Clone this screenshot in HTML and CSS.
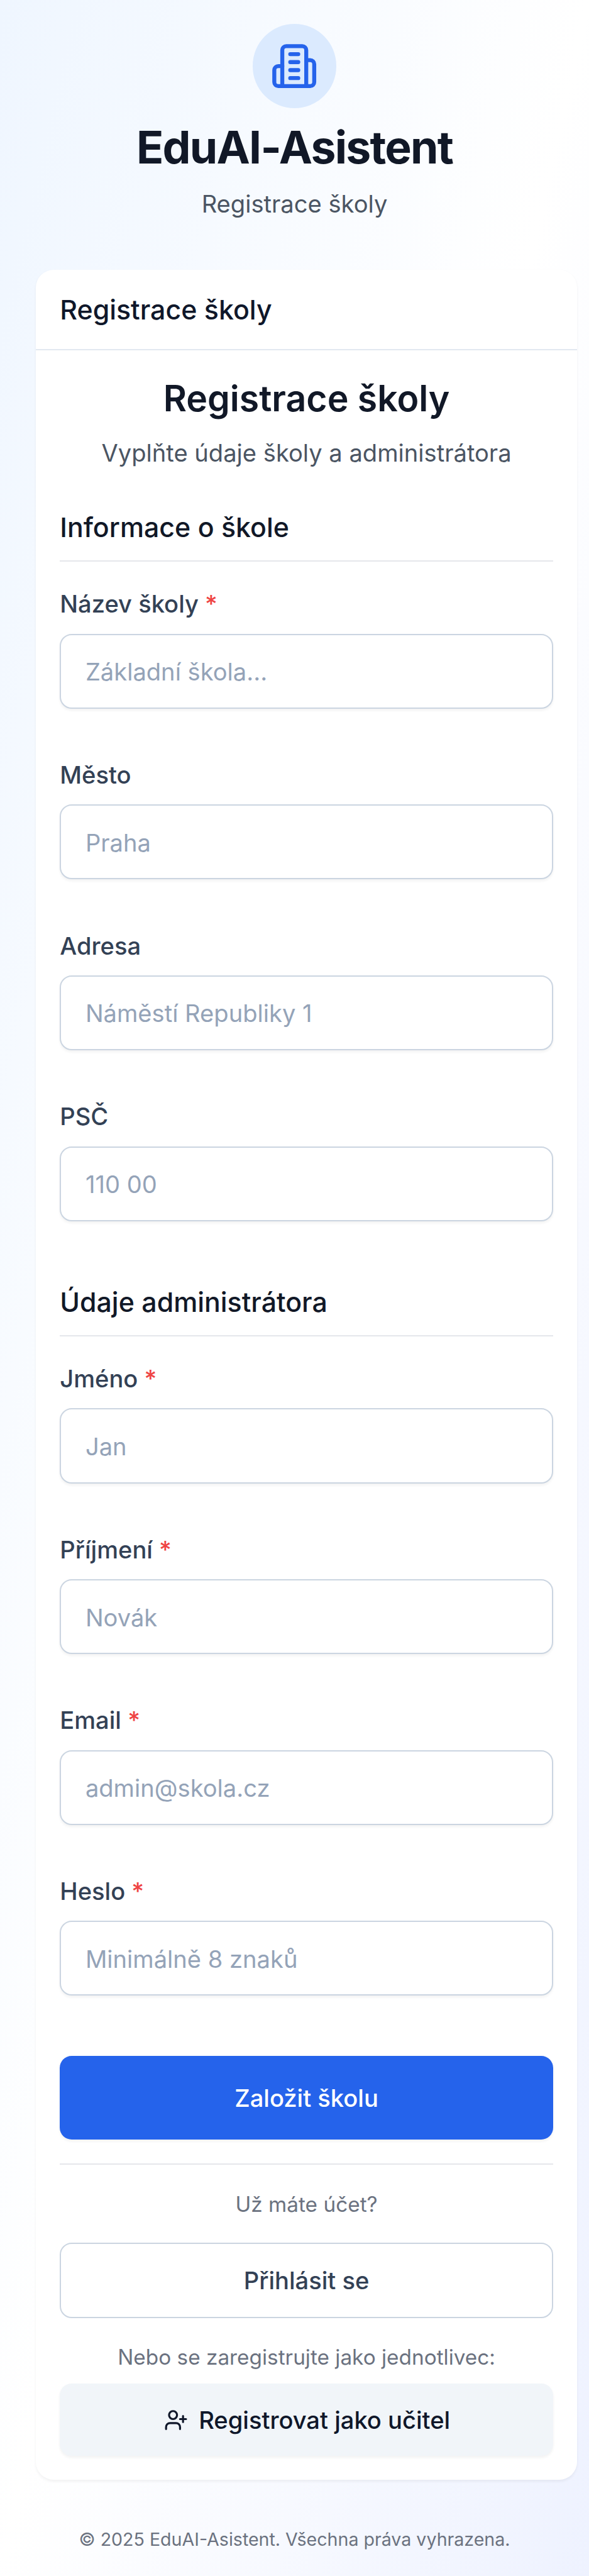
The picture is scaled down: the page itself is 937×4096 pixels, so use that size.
FILE: index.html
```html
<!DOCTYPE html>
<html lang="cs">
<head>
  <meta charset="utf-8">
  <title>EduAI-Asistent – Registrace školy</title>
  <link rel="stylesheet" href="styles.css">
</head>
<body>
  <div class="page">
    <header class="brand">
      <div class="brand-icon">
        <svg viewBox="0 0 24 24" class="icon icon-lg" aria-hidden="true">
          <path d="M6 22V4a2 2 0 0 1 2-2h8a2 2 0 0 1 2 2v18Z"/>
          <path d="M6 12H4a2 2 0 0 0-2 2v6a2 2 0 0 0 2 2h2"/>
          <path d="M18 9h2a2 2 0 0 1 2 2v9a2 2 0 0 1-2 2h-2"/>
          <path d="M10 6h4M10 10h4M10 14h4M10 18h4"/>
        </svg>
      </div>
      <h1 class="brand-title">EduAI-Asistent</h1>
      <p class="brand-subtitle">Registrace školy</p>
    </header>

    <main class="card">
      <div class="card-header"><h3 class="card-title">Registrace školy</h3></div>
      <div class="card-body">
        <div class="intro">
          <h2 class="intro-title">Registrace školy</h2>
          <p class="intro-text">Vyplňte údaje školy a administrátora</p>
        </div>

        <form class="form">
          <section class="section">
            <h3 class="section-title">Informace o škole</h3>
            <div class="fields">
              <div class="field">
                <label class="label" for="school">Název školy <span class="required">*</span></label>
                <input class="input" id="school" type="text" placeholder="Základní škola...">
              </div>
              <div class="field">
                <label class="label" for="city">Město</label>
                <input class="input" id="city" type="text" placeholder="Praha">
              </div>
              <div class="field">
                <label class="label" for="address">Adresa</label>
                <input class="input" id="address" type="text" placeholder="Náměstí Republiky 1">
              </div>
              <div class="field">
                <label class="label" for="zip">PSČ</label>
                <input class="input" id="zip" type="text" placeholder="110 00">
              </div>
            </div>
          </section>

          <section class="section">
            <h3 class="section-title">Údaje administrátora</h3>
            <div class="fields">
              <div class="field">
                <label class="label" for="first">Jméno <span class="required">*</span></label>
                <input class="input" id="first" type="text" placeholder="Jan">
              </div>
              <div class="field">
                <label class="label" for="last">Příjmení <span class="required">*</span></label>
                <input class="input" id="last" type="text" placeholder="Novák">
              </div>
              <div class="field">
                <label class="label" for="email">Email <span class="required">*</span></label>
                <input class="input" id="email" type="email" placeholder="admin@skola.cz">
              </div>
              <div class="field">
                <label class="label" for="password">Heslo <span class="required">*</span></label>
                <input class="input" id="password" type="password" placeholder="Minimálně 8 znaků">
              </div>
            </div>
          </section>

          <button class="button button-primary" type="button">Založit školu</button>
        </form>

        <div class="alternatives">
          <p class="hint">Už máte účet?</p>
          <button class="button button-outline" type="button">Přihlásit se</button>
          <div class="individual">
            <p class="hint">Nebo se zaregistrujte jako jednotlivec:</p>
            <button class="button button-muted" type="button">
              <svg viewBox="0 0 24 24" class="icon icon-sm" aria-hidden="true">
                <path d="M16 21v-2a4 4 0 0 0-4-4H6a4 4 0 0 0-4 4v2"/>
                <circle cx="9" cy="7" r="4"/>
                <path d="M19 8v6M22 11h-6"/>
              </svg>
              Registrovat jako učitel
            </button>
          </div>
        </div>
      </div>
    </main>

    <footer class="footer">© 2025 EduAI-Asistent. Všechna práva vyhrazena.</footer>
  </div>
</body>
</html>
```

FILE: styles.css
```css
/* 0.1rem is one design unit */
html {
  font-size: 23.8275px;
}

*,
*::before,
*::after {
  box-sizing: border-box;
}

body,
h1,
h2,
h3,
p {
  margin: 0;
}

body {
  font-family: Inter, "Liberation Sans", sans-serif;
  font-size: 1.6rem;
  line-height: 2.4rem;
  color: #111827;
}

.page {
  min-height: 100vh;
  padding: 1.6rem 0;
  background: linear-gradient(to bottom right, #eff6ff, #ffffff, #eef2ff);
}

.brand {
  display: flex;
  flex-direction: column;
  align-items: center;
  gap: 0.8rem;
  margin-bottom: 3.2rem;
}

.brand-icon {
  display: flex;
  align-items: center;
  justify-content: center;
  width: 5.6rem;
  height: 5.6rem;
  border-radius: 50%;
  background: #dbeafe;
  color: #2563eb;
}

.icon {
  flex: none;
  fill: none;
  stroke: currentColor;
  stroke-width: 2;
  stroke-linecap: round;
  stroke-linejoin: round;
}

.icon-lg {
  width: 3.2rem;
  height: 3.2rem;
}

.icon-sm {
  width: 1.6rem;
  height: 1.6rem;
  margin-top: -0.08rem;
}

.brand-title {
  font-size: 3rem;
  line-height: 3.6rem;
  font-weight: 700;
  letter-spacing: -0.025em;
}

.brand-subtitle,
.intro-text {
  color: #4b5563;
}

/* optical baseline correction */
.brand-title,
.brand-subtitle,
.intro-text,
.label,
.hint {
  padding-top: 0.04rem;
  margin-bottom: -0.04rem;
}

.card {
  margin: 0 0.8rem 0 2.4rem;
  border-radius: 1.2rem;
  background: #ffffff;
  box-shadow: 0 0.1rem 0.2rem rgba(0, 0, 0, 0.05);
}

.card-header {
  display: flex;
  align-items: center;
  height: 5.4rem;
  padding: 0 1.6rem;
  border-bottom: 0.1rem solid #e2e8f0;
}

.card-title {
  font-size: 1.8rem;
  line-height: 2.8rem;
  font-weight: 500;
  color: #0f172a;
}

.card-body {
  padding: 1.6rem;
}

.intro {
  display: flex;
  flex-direction: column;
  gap: 0.8rem;
  margin-bottom: 2.4rem;
  text-align: center;
}

.intro-title {
  font-size: 2.4rem;
  line-height: 3.2rem;
  font-weight: 600;
}

.form {
  display: flex;
  flex-direction: column;
  gap: 4rem;
}

.section-title {
  height: 3.7rem;
  margin-bottom: 1.6rem;
  border-bottom: 0.1rem solid #e5e7eb;
  font-size: 1.8rem;
  line-height: 2.8rem;
  font-weight: 500;
}

.fields {
  display: flex;
  flex-direction: column;
  gap: 3.2rem;
}

.field {
  display: flex;
  flex-direction: column;
  gap: 0.8rem;
}

.label {
  font-weight: 500;
  color: #334155;
}

.required {
  color: #ef4444;
}

.input {
  width: 100%;
  height: 5rem;
  padding: 0.08rem 1.6rem 0 1.62rem;
  border: 0.1rem solid #cbd5e1;
  border-radius: 0.8rem;
  background: #ffffff;
  box-shadow: 0 0.1rem 0.2rem rgba(0, 0, 0, 0.05);
  font: inherit;
  color: #0f172a;
}

.input::placeholder {
  color: #94a3b8;
}

.button {
  display: flex;
  align-items: center;
  justify-content: center;
  gap: 0.72rem;
  width: 100%;
  padding: 0.08rem 0 0;
  border: 0;
  border-radius: 0.8rem;
  font: inherit;
  font-weight: 500;
}

.button-primary {
  height: 5.6rem;
  background: #2563eb;
  color: #ffffff;
  box-shadow: 0 0.1rem 0.2rem rgba(0, 0, 0, 0.05);
}

.button-outline {
  height: 5rem;
  border: 0.1rem solid #cbd5e1;
  background: #ffffff;
  color: #334155;
}

.button-muted {
  height: 4.8rem;
  padding-left: 0.08rem;
  background: #f1f5f9;
  color: #0f172a;
  box-shadow: 0 0.1rem 0.2rem rgba(0, 0, 0, 0.05);
}

.alternatives {
  display: flex;
  flex-direction: column;
  gap: 1.6rem;
  margin-top: 1.6rem;
  padding-top: 1.616rem;
  border-top: 0.1rem solid #e5e7eb;
}

.individual {
  display: flex;
  flex-direction: column;
  gap: 0.8rem;
}

.hint {
  font-size: 1.4rem;
  line-height: 2rem;
  text-align: center;
  color: #6b7280;
}

.footer {
  margin-top: 3.2rem;
  font-size: 1.2rem;
  line-height: 1.6rem;
  text-align: center;
  color: #6b7280;
}
```
